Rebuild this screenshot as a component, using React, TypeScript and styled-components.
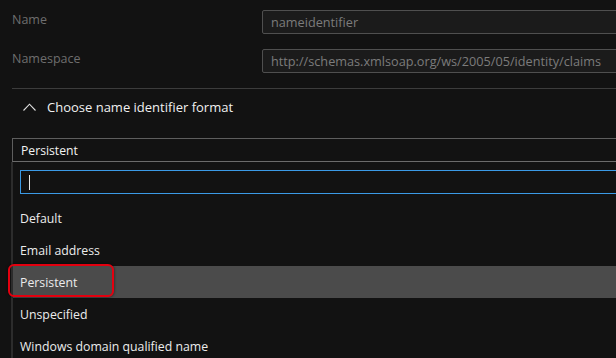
import React from "react";
import styled, { createGlobalStyle } from "styled-components";

const GlobalStyle = createGlobalStyle`
	html, body {
		margin: 0;
		padding: 0;
		background: #121212;
		overflow: hidden;
	}
	body {
		font-family: "Segoe UI", "Open Sans", "Noto Sans", sans-serif;
		font-size: 12.4px;
	}
`;

const Page = styled.div`
	width: 640px;
	height: 358px;
	padding-left: 12px;
	box-sizing: border-box;
	position: relative;
`;

const Fields = styled.div`
	display: flex;
	flex-direction: column;
	gap: 15px;
	padding-top: 10px;
	padding-bottom: 15px;
	border-bottom: 1px solid #3c3c3c;
`;

const FieldRow = styled.div`
	display: grid;
	grid-template-columns: 250px 1fr;
	align-items: center;
`;

const Label = styled.label`
	color: #6e6e6e;
	font-size: 12.5px;
	margin-top: -6px;
`;

const ReadOnlyInput = styled.div`
	height: 24px;
	box-sizing: border-box;
	border: 1px solid #4f4f4f;
	border-radius: 2px;
	background: #1b1b1b;
	color: #7c7c7c;
	font-size: 12.7px;
	padding: 0 8px;
	display: flex;
	align-items: center;
	white-space: nowrap;
`;

const SectionHeader = styled.div`
	display: flex;
	align-items: center;
	gap: 11px;
	height: 36px;
	padding-left: 11px;
	color: #f0f0f0;
	font-size: 13px;
`;

const Select = styled.div`
	margin-top: 13px;
	height: 24px;
	box-sizing: border-box;
	border: 1px solid #5e5e5e;
	border-bottom-color: #6a6a6a;
	display: flex;
	align-items: center;
	padding-left: 8px;
	color: #f2f2f2;
	font-size: 12.2px;
`;

const Dropdown = styled.div`
	margin-left: -1px;
	border-left: 2px solid #2c2c2c;
	padding-top: 8px;
`;

const SearchBox = styled.div`
	margin-left: 7px;
	height: 24px;
	box-sizing: border-box;
	border: 1px solid #3b9ae6;
	display: flex;
	align-items: center;
	padding-left: 8px;
`;

const Caret = styled.span`
	width: 1px;
	height: 15px;
	background: #e8e8e8;
`;

const List = styled.ul`
	list-style: none;
	margin: 8px 0 0;
	padding: 0;
`;

const Option = styled.li<{ $active?: boolean }>`
	height: 32px;
	display: flex;
	align-items: center;
	padding-left: 7px;
	color: #ececec;
	font-size: 12.3px;
	background: ${(p) => (p.$active ? "#4b4b4b" : "transparent")};
	position: relative;
`;

const Annotation = styled.span`
	position: absolute;
	left: -5px;
	top: -2px;
	width: 106px;
	height: 33px;
	box-sizing: border-box;
	border: 2px solid #e3000f;
	border-radius: 6px;
	box-shadow: 0 0 3px rgba(0, 0, 0, 0.6);
`;

const Chevron = () => (
	<svg width="13" height="8" viewBox="0 0 13 8" fill="none">
		<path d="M0.5 7.5 L6.5 1.2 L12.5 7.5" stroke="#e0e0e0" strokeWidth="1.1" />
	</svg>
);

const options = ["Default", "Email address", "Persistent", "Unspecified", "Windows domain qualified name"];

export default function App() {
	return (
		<>
			<GlobalStyle />
			<Page>
				<Fields>
					<FieldRow>
						<Label>Name</Label>
						<ReadOnlyInput>nameidentifier</ReadOnlyInput>
					</FieldRow>
					<FieldRow>
						<Label>Namespace</Label>
						<ReadOnlyInput>http://schemas.xmlsoap.org/ws/2005/05/identity/claims</ReadOnlyInput>
					</FieldRow>
				</Fields>
				<SectionHeader>
					<Chevron />
					<span>Choose name identifier format</span>
				</SectionHeader>
				<Select>Persistent</Select>
				<Dropdown>
					<SearchBox>
						<Caret />
					</SearchBox>
					<List>
						{options.map((o) => (
							<Option key={o} $active={o === "Persistent"}>
								{o}
								{o === "Persistent" && <Annotation />}
							</Option>
						))}
					</List>
				</Dropdown>
			</Page>
		</>
	);
}
